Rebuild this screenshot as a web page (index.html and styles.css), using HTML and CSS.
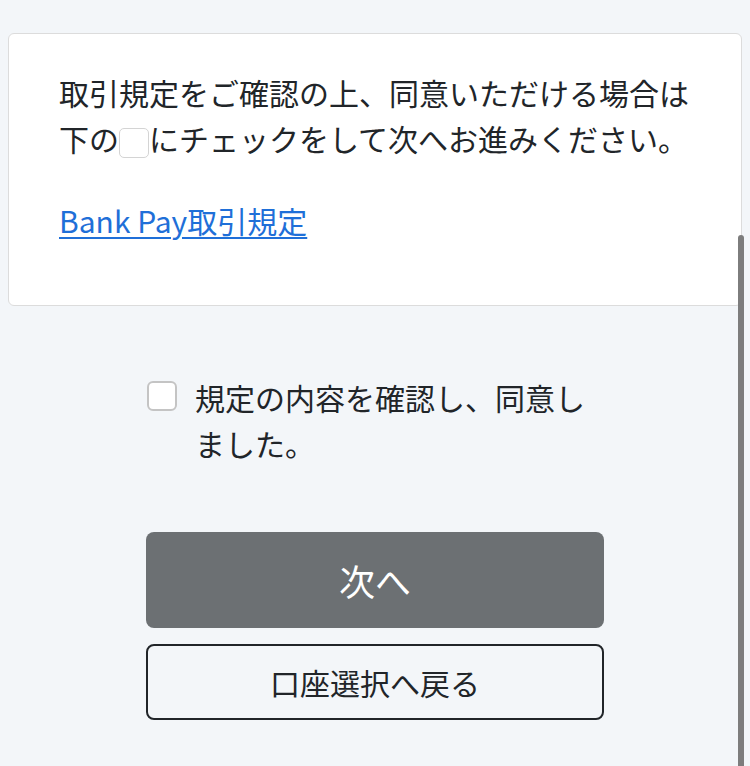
FILE: index.html
```html
<!DOCTYPE html>
<html lang="ja">
<head>
    <meta charset="UTF-8">
    <meta name="viewport" content="width=device-width, initial-scale=1.0">
    <title>Bank Pay取引規定</title>
    <link rel="stylesheet" href="styles.css">
</head>
<body>
    <main class="page">
        <section class="card">
            <p class="lead">取引規定をご確認の上、同意いただける場合は<br>下の<span class="box"></span>にチェックをして次へお進みください。</p>
            <p class="terms"><a href="#">Bank Pay取引規定</a></p>
        </section>

        <div class="actions">
            <label class="agree">
                <input type="checkbox" id="agree">
                <span>規定の内容を確認し、同意しました。</span>
            </label>
            <button class="btn-next" id="next" disabled>次へ</button>
            <button class="btn-back">口座選択へ戻る</button>
        </div>
    </main>
    <div class="scroll-thumb"></div>
    <script>
        // enable the next button once the terms are accepted
        document.getElementById('agree').addEventListener('change', function () {
            document.getElementById('next').disabled = !this.checked;
        });
    </script>
</body>
</html>
```

FILE: styles.css
```css
body {
    margin: 0;
    background-color: #f3f6f9;
    color: #212529;
    font-family: "Noto Sans CJK JP", sans-serif;
    font-size: 30px;
    line-height: 46px;
}
.page {
    padding: 33px 8px 40px;
}
.card {
    background-color: #fff;
    border: 1px solid #dcdcdc;
    border-radius: 6px;
    padding: 35px 50px 62px;
}
.card p {
    margin: 0;
}
.lead {
    margin-bottom: 36px !important;
}
.box {
    display: inline-block;
    width: 30px;
    height: 30px;
    box-sizing: border-box;
    border: 1px solid #d4d4d4;
    border-radius: 5px;
    vertical-align: -7px;
}
.terms a {
    color: #1f6fd8;
    text-decoration: underline;
    text-underline-offset: 4px;
    text-decoration-thickness: 2px;
}
.actions {
    width: 458px;
    margin: 68px auto 0;
    display: flex;
    flex-direction: column;
}
.agree {
    display: flex;
    align-items: flex-start;
    gap: 18px;
    padding-left: 1px;
    margin-bottom: 66px;
    cursor: pointer;
}
.agree input {
    appearance: none;
    -webkit-appearance: none;
    flex: none;
    width: 30px;
    height: 30px;
    margin: 7px 0 0;
    box-sizing: border-box;
    border: 2px solid #c4c4c4;
    border-radius: 6px;
    background-color: #fff;
}
.agree input:checked {
    background-color: #1f6fd8;
    border-color: #1f6fd8;
}
button {
    font-family: inherit;
    border-radius: 8px;
    cursor: pointer;
}
.btn-next {
    height: 96px;
    border: none;
    background-color: #6c7073;
    color: #fff;
    font-size: 36px;
}
.btn-back {
    height: 76px;
    margin-top: 16px;
    border: 2px solid #212529;
    background-color: transparent;
    color: #212529;
    font-size: 30px;
}
.scroll-thumb {
    position: fixed;
    top: 235px;
    right: 6px;
    bottom: -4px;
    width: 6px;
    border-radius: 3px;
    background-color: #7d7d7d;
}
```
